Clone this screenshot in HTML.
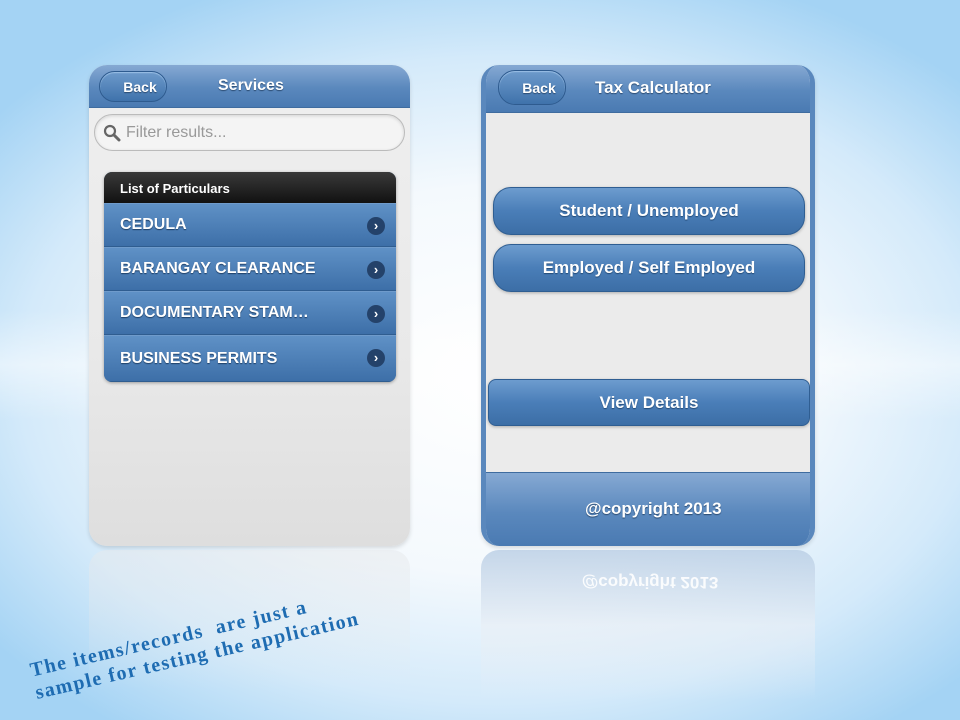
<!DOCTYPE html>
<html><head><meta charset="utf-8"><style>
*{margin:0;padding:0;box-sizing:border-box}
body{width:960px;height:720px;overflow:hidden;position:relative;font-family:"Liberation Sans",Arial,sans-serif;
background:radial-gradient(ellipse 640px 430px at 500px 380px,#ffffff 0%,#f4f9fd 45%,#d4eafa 75%,#a4d3f4 100%);}
.band{position:absolute;left:0;top:310px;width:960px;height:110px;background:linear-gradient(#ffffff00,#ffffff77,#ffffff00)}
.hdr{position:absolute;background:linear-gradient(#86a9d3,#5a88bd 55%,#4a7ab2);border-bottom:1px solid #3f6c9f;color:#fff;font-weight:bold;text-shadow:0 1px 1px #2a4a70}
.back{position:absolute;border-radius:17px;background:linear-gradient(#6d9acb,#3f72ab);border:1px solid #2e5b8f;box-shadow:inset 0 1px 1px #9cc0e6;color:#fff;font-size:14px;font-weight:bold;display:flex;align-items:center;justify-content:center;padding-left:14px;text-shadow:0 1px 1px #2a4a70}
.btn{position:absolute;background:linear-gradient(#6d9ccf,#4a7eb8 50%,#3c6ea6);border:1px solid #2f5e92;color:#fff;font-weight:bold;font-size:17px;display:flex;align-items:center;justify-content:center;text-shadow:0 1px 1px #234a75;box-shadow:0 1px 3px #0004}
.item{height:44px;border-top:1px solid #6f9bcb;border-bottom:1px solid #2f5d90;background:linear-gradient(#5f91c6,#3d6fa8);color:#fff;font-weight:bold;font-size:16px;display:flex;align-items:center;padding-left:16px;position:relative;text-shadow:0 1px 1px #1e3f66}
.arr{position:absolute;right:11px;top:13px;width:18px;height:18px;border-radius:50%;background:#24426a;color:#fff;font-size:13px;line-height:17px;text-align:center;text-shadow:none}
</style></head><body>
<div class="band"></div>

<div style="position:absolute;left:89px;top:65px;width:321px;height:481px;border-radius:18px;overflow:hidden;background:linear-gradient(#efefef,#e9e9e9 60%,#dedede);box-shadow:0 2px 4px #0002">
 <div class="hdr" style="left:0;top:0;width:321px;height:43px;font-size:16px"><span style="position:absolute;left:129px;top:12px">Services</span></div>
 <div class="back" style="left:10px;top:6px;width:68px;height:31px">Back</div>
 <div style="position:absolute;left:5px;top:49px;width:311px;height:37px;border-radius:19px;border:1px solid #bbb;background:#f4f4f4;box-shadow:inset 0 1px 3px #0002;color:#999;font-size:16px;padding:9px 0 0 31px">Filter results...</div>
 <svg style="position:absolute;left:14px;top:59px" width="18" height="18"><circle cx="7" cy="7" r="5" fill="none" stroke="#666" stroke-width="2.2"/><line x1="11" y1="11" x2="16" y2="16" stroke="#666" stroke-width="3" stroke-linecap="round"/></svg>
 <div style="position:absolute;left:15px;top:107px;width:292px;height:210px;border-radius:8px;overflow:hidden;box-shadow:0 1px 3px #0005;background:#3d6fa8">
  <div style="height:31px;background:linear-gradient(#3a3a3a,#111);color:#fff;font-weight:bold;font-size:13px;padding:9px 0 0 16px">List of Particulars</div>
  <div class="item">CEDULA<span class="arr">›</span></div>
  <div class="item">BARANGAY CLEARANCE<span class="arr">›</span></div>
  <div class="item">DOCUMENTARY STAM…<span class="arr">›</span></div>
  <div class="item" style="height:47px">BUSINESS PERMITS<span class="arr">›</span></div>
 </div>
</div>

<div style="position:absolute;left:481px;top:65px;width:334px;height:481px;border-radius:18px;overflow:hidden;background:#ebebeb;border-left:5px solid #5a88bd;border-right:5px solid #5a88bd;box-shadow:0 2px 4px #0002">
 <div class="hdr" style="left:0;top:0;width:324px;height:48px;font-size:17px"><span style="position:absolute;left:109px;top:13px">Tax Calculator</span></div>
 <div class="back" style="left:12px;top:5px;width:68px;height:35px">Back</div>
 <div class="btn" style="left:7px;top:122px;width:312px;height:48px;border-radius:18px">Student / Unemployed</div>
 <div class="btn" style="left:7px;top:179px;width:312px;height:48px;border-radius:18px">Employed / Self Employed</div>
 <div class="btn" style="left:2px;top:314px;width:322px;height:47px;border-radius:8px">View Details</div>
 <div class="hdr" style="left:0;top:407px;width:324px;height:74px;font-size:17px;border-top:1px solid #3f6c9f;border-bottom:none"><span style="position:absolute;left:99px;top:26px">@copyright 2013</span></div>
</div>
<div style="position:absolute;left:481px;top:550px;width:334px;height:150px;border-radius:18px 18px 0 0;background:linear-gradient(#b8cde4cc,#e8eef5aa 50%,#ffffff00);"></div>
<div style="position:absolute;left:570px;top:572px;width:160px;font-weight:bold;font-size:17px;color:#fff;transform:scaleY(-1);text-align:center;opacity:.9">@copyright 2013</div>
<div style="position:absolute;left:89px;top:550px;width:321px;height:140px;border-radius:18px 18px 0 0;background:linear-gradient(#e6e9ec88,#ffffff00)"></div>

<div style="position:absolute;left:28px;top:660px;transform:rotate(-13deg);transform-origin:left top;font-family:'Liberation Serif',serif;font-weight:bold;font-size:20px;letter-spacing:1.4px;line-height:23px;color:#1e6cb2;white-space:nowrap">The items/records&nbsp; are just a<br>sample for testing the application</div>
</body></html>
